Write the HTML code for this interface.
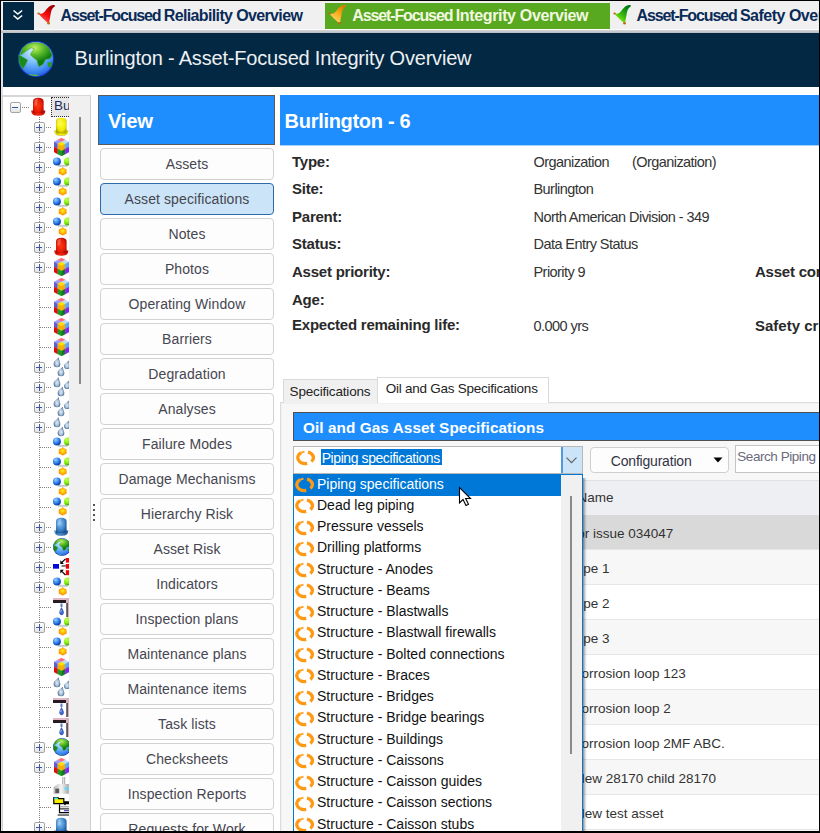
<!DOCTYPE html>
<html><head><meta charset="utf-8"><style>
*{box-sizing:border-box;margin:0;padding:0}
html,body{width:820px;height:833px;overflow:hidden;background:#fff;font-family:"Liberation Sans",sans-serif;color:#333}
.a{position:absolute}
.nw{white-space:nowrap}
.btn{position:absolute;left:100px;width:174px;height:32px;border:1px solid #d2d2d2;border-radius:4px;background:#fdfdfd}
.btn.sel{background:#cce4f7;border-color:#2f6aa8}
.ebox{width:11px;height:11px;border:1.3px solid #a4a4a4;border-radius:2px;background:linear-gradient(#fff,#e4e4e4)}
.ebox .h{position:absolute;left:1.3px;top:3.9px;width:6px;height:1.4px;background:#3a56a0}
.ebox .v{position:absolute;left:3.6px;top:1.3px;width:1.4px;height:6.4px;background:#3a56a0}
</style></head><body>
<svg width="0" height="0" style="position:absolute"><defs>
<radialGradient id="gRed" cx="45%" cy="50%" r="60%"><stop offset="0" stop-color="#ff3a10"/><stop offset=".7" stop-color="#e41a08"/><stop offset="1" stop-color="#a80800"/></radialGradient>
<radialGradient id="gYel" cx="50%" cy="40%" r="60%"><stop offset="0" stop-color="#ffff40"/><stop offset=".7" stop-color="#f0e800"/><stop offset="1" stop-color="#b0a800"/></radialGradient>
<radialGradient id="gBlu" cx="40%" cy="35%" r="70%"><stop offset="0" stop-color="#8cc4f0"/><stop offset=".6" stop-color="#3d86cc"/><stop offset="1" stop-color="#1d4f8a"/></radialGradient>
<radialGradient id="gBall" cx="35%" cy="30%" r="70%"><stop offset="0" stop-color="#9fd0ff"/><stop offset=".6" stop-color="#2a7ef0"/><stop offset="1" stop-color="#1040a0"/></radialGradient>
<radialGradient id="gGreen" cx="35%" cy="30%" r="70%"><stop offset="0" stop-color="#c8ff60"/><stop offset=".6" stop-color="#80f000"/><stop offset="1" stop-color="#30a010"/></radialGradient>
<radialGradient id="gOcean" cx="40%" cy="60%" r="65%"><stop offset="0" stop-color="#b8e4ff"/><stop offset=".7" stop-color="#3f9cf0"/><stop offset="1" stop-color="#1a5ac8"/></radialGradient>
<linearGradient id="gBox" x1="0" y1="0" x2="0" y2="1"><stop offset="0" stop-color="#ffffff"/><stop offset="1" stop-color="#dcdcdc"/></linearGradient>
<linearGradient id="gDrop" x1="0" y1="0" x2="1" y2="1"><stop offset="0" stop-color="#e8f0f8"/><stop offset=".5" stop-color="#7a98b8"/><stop offset="1" stop-color="#1a3a60"/></linearGradient>
<symbol id="ring" viewBox="0 0 20 17"><path d="M5.13 2.77 A7.8 5.9 0 0 0 11.22 13.37" fill="none" stroke="#ff9812" stroke-width="3.3"/><path d="M8.51 1.76 A7.8 5.9 0 0 0 5.13 2.77" fill="none" stroke="#ffa428" stroke-width="2"/><path d="M12.01 1.99 A7.8 5.9 0 0 1 15.40 11.55" fill="none" stroke="#ff9812" stroke-width="3.3"/></symbol>
<symbol id="bulbR" viewBox="0 0 16 20"><path d="M1.3 13.5 C1.3 17 3 18.7 8.3 18.7 C13.6 18.7 15.3 17 15.3 13.5Z" fill="url(#gRed)"/><path d="M3 16.5 L3 4.5 C3 2 5 0.8 8.3 0.8 C11.6 0.8 13.6 2 13.6 4.5 L13.6 16.5Z" fill="url(#gRed)"/><path d="M4.5 3.5 C5.5 2 7 1.8 8 1.8 L7 8 L4.5 9Z" fill="#fff" opacity=".25"/></symbol>
<symbol id="bulbY" viewBox="0 0 16 20"><path d="M1.3 13.5 C1.3 17 3 18.7 8.3 18.7 C13.6 18.7 15.3 17 15.3 13.5Z" fill="url(#gYel)"/><path d="M3 16.5 L3 4.5 C3 2 5 0.8 8.3 0.8 C11.6 0.8 13.6 2 13.6 4.5 L13.6 16.5Z" fill="url(#gYel)"/><path d="M4.5 3.5 C5.5 2 7 1.8 8 1.8 L7 8 L4.5 9Z" fill="#fff" opacity=".25"/></symbol>
<symbol id="bulbB" viewBox="0 0 16 20"><path d="M1.3 13.5 C1.3 17 3 18.7 8.3 18.7 C13.6 18.7 15.3 17 15.3 13.5Z" fill="url(#gBlu)"/><path d="M3 16.5 L3 4.5 C3 2 5 0.8 8.3 0.8 C11.6 0.8 13.6 2 13.6 4.5 L13.6 16.5Z" fill="url(#gBlu)"/><path d="M4.5 3.5 C5.5 2 7 1.8 8 1.8 L7 8 L4.5 9Z" fill="#fff" opacity=".25"/></symbol>
<symbol id="cube" viewBox="0 0 16 18"><polygon points="7.5,0 11.25,2 7.5,4 3.75,2" fill="#ff6878" stroke="#ff6878" stroke-width=".4" stroke-linejoin="round"/><polygon points="3.75,2 7.5,4 3.75,6 0,4" fill="#9c9cf8" stroke="#9c9cf8" stroke-width=".4" stroke-linejoin="round"/><polygon points="11.25,2 15,4 11.25,6 7.5,4" fill="#b8dcff" stroke="#b8dcff" stroke-width=".4" stroke-linejoin="round"/><polygon points="7.5,4 11.25,6 7.5,8 3.75,6" fill="#ffe000" stroke="#ffe000" stroke-width=".4" stroke-linejoin="round"/><polygon points="0,4 3.75,6 3.75,11 0,9" fill="#5c5ce0" stroke="#5c5ce0" stroke-width=".4" stroke-linejoin="round"/><polygon points="3.75,6 7.5,8 7.5,13 3.75,11" fill="#f0b000" stroke="#f0b000" stroke-width=".4" stroke-linejoin="round"/><polygon points="0,9 3.75,11 3.75,16 0,14" fill="#e80808" stroke="#e80808" stroke-width=".4" stroke-linejoin="round"/><polygon points="3.75,11 7.5,13 7.5,18 3.75,16" fill="#1a9a28" stroke="#1a9a28" stroke-width=".4" stroke-linejoin="round"/><polygon points="7.5,8 11.25,6 11.25,11 7.5,13" fill="#ffa800" stroke="#ffa800" stroke-width=".4" stroke-linejoin="round"/><polygon points="11.25,6 15,4 15,9 11.25,11" fill="#58a8f8" stroke="#58a8f8" stroke-width=".4" stroke-linejoin="round"/><polygon points="7.5,13 11.25,11 11.25,16 7.5,18" fill="#0c7a18" stroke="#0c7a18" stroke-width=".4" stroke-linejoin="round"/><polygon points="11.25,11 15,9 15,14 11.25,16" fill="#8a1ef0" stroke="#8a1ef0" stroke-width=".4" stroke-linejoin="round"/></symbol>
<radialGradient id="gOr" cx="50%" cy="40%" r="60%"><stop offset="0" stop-color="#fff020"/><stop offset=".6" stop-color="#ffb000"/><stop offset="1" stop-color="#ff7a00"/></radialGradient>
<symbol id="mol" viewBox="0 0 16 20"><rect x="5" y="7.8" width="9.5" height="2" fill="#c8c8c8"/><rect x="9" y="9" width="1.4" height="2" fill="#d0d0d0"/><circle cx="3.9" cy="4.4" r="4" fill="url(#gBall)"/><circle cx="15" cy="4.4" r="4" fill="url(#gGreen)"/><path d="M9.7 10.6 L13.6 12.6 L13.6 16.6 L9.7 18.6 L5.8 16.6 L5.8 12.6Z" fill="url(#gOr)"/></symbol>
<radialGradient id="gDrop2" cx="50%" cy="55%" r="55%"><stop offset="0" stop-color="#e0ecf6"/><stop offset=".55" stop-color="#a8c0d8"/><stop offset="1" stop-color="#2a4c78"/></radialGradient>
<symbol id="drops" viewBox="0 0 16 20"><path d="M5.8 0.3 C5.3 2.3 7.3 4.359999999999999 7.3 7 A3.3 3.3 0 0 1 0.7000000000000002 7 C0.7000000000000002 3.7 3.8 2.8 5.8 0.3Z" fill="url(#gDrop2)"/><path d="M15.8 3.6 C15.3 5.6 16.8 6.959999999999999 16.8 9.2 A2.8 2.8 0 0 1 11.2 9.2 C11.2 6.3999999999999995 13.8 6.1 15.8 3.6Z" fill="url(#gDrop2)"/><path d="M9.8 9.8 C9.3 11.8 11.3 13.36 11.3 16 A3.3 3.3 0 0 1 4.7 16 C4.7 12.7 7.800000000000001 12.3 9.8 9.8Z" fill="url(#gDrop2)"/></symbol>
<radialGradient id="gLand" cx="45%" cy="22%" r="60%"><stop offset="0" stop-color="#c0f060"/><stop offset=".5" stop-color="#58b828"/><stop offset="1" stop-color="#0c7a10"/></radialGradient>
<radialGradient id="gSea" cx="42%" cy="25%" r="75%"><stop offset="0" stop-color="#d8f0ff"/><stop offset=".45" stop-color="#7ec0fa"/><stop offset=".85" stop-color="#3a86f0"/><stop offset="1" stop-color="#2a60e0"/></radialGradient>
<symbol id="globe" viewBox="0 0 36 36"><circle cx="18" cy="18" r="18" fill="#1838c8"/><circle cx="18" cy="18" r="17" fill="url(#gSea)"/>
<path d="M2.4 12.4 L4.4 7.2 L9.5 3.1 L16.7 1.6 L24.9 2.6 L31.1 7.2 L34.1 13.9 L32.1 17.5 L27.5 18.5 L24.9 23.6 L20.8 25.7 L18.8 19 L15.2 16.5 L12.6 13.9 L13.1 11.9 L16.2 7.8 L13.1 6.7 L6.5 11.3 L2.9 13.9Z" fill="url(#gLand)" stroke="#4aa830" stroke-width=".6" stroke-linejoin="round"/>
<path d="M0.8 13.9 L9.5 19 L7.5 23.6 L4.9 27.7 L1.4 22.6Z" fill="#1a8a18" stroke="#3a9a28" stroke-width=".6" stroke-linejoin="round"/>
<path d="M29.5 21.6 L34.1 21.1 L33.1 26.2 L30 25.7Z" fill="#2a9a20"/>
<path d="M10.6 32.9 L21.8 33.9 L17.7 35.2 L11.5 34.1Z" fill="#50c040"/></symbol>
<symbol id="net" viewBox="0 0 16 20"><rect x="0" y="7" width="6" height="4.7" fill="#0008e0"/><rect x="12.8" y="1" width="3.2" height="4.6" fill="#f00000"/><rect x="12.8" y="7" width="3.2" height="4.7" fill="#f00000"/><rect x="12.8" y="13.2" width="3.2" height="5" fill="#f00000"/><rect x="8.5" y="8.2" width="4.3" height="1.5" fill="#505050"/><path d="M12.5 1.8 L8.8 5.5" stroke="#000" stroke-width="1.2"/><path d="M7.3 3.3 L7.3 6.9 L10.9 6.9Z" fill="#000"/><path d="M12.5 18 L8.8 14.3" stroke="#000" stroke-width="1.2"/><path d="M7.3 16.4 L7.3 12.7 L10.9 12.7Z" fill="#000"/></symbol>
<symbol id="pipe" viewBox="0 0 16 20"><rect x="0" y="1" width="16" height="5" fill="#2a1a22"/><rect x="0" y="1" width="15" height="2" fill="#e0b8c8"/><rect x="13" y="1" width="3" height="19" fill="#d8b0c0"/><rect x="13.5" y="6" width="1.2" height="14" fill="#303030"/><path d="M7.5 6.5 L9.5 6.5 L9.5 10 L7.5 10Z" fill="#5a80c8"/><path d="M8.5 10 C7 12.5 6.3 14 6.3 15.5 C6.3 17.3 7.5 18.2 8.6 18.2 C9.7 18.2 10.8 17.3 10.8 15.5 C10.8 14 10 12.5 8.5 10Z" fill="#3a60c0"/><path d="M7.4 14.5 C7.6 13.5 8 12.8 8.4 12.3 L8.3 16 Z" fill="#c0d8ff"/></symbol>
<linearGradient id="gFac" x1="0" y1="0" x2="1" y2="0"><stop offset="0" stop-color="#b8b8b8"/><stop offset=".5" stop-color="#f4f4f4"/><stop offset="1" stop-color="#a8a8a8"/></linearGradient>
<symbol id="factory" viewBox="0 0 16 20"><rect x="9" y="0" width="3.2" height="8" fill="#b4b4b4"/><rect x="9.8" y="0" width="1.2" height="8" fill="#e0e0e0"/><path d="M0.6 10 L5 7 L15.9 7 L15.9 16.8 L0.6 16.8Z" fill="url(#gFac)"/><rect x="2.3" y="11.6" width="3.8" height="4.6" fill="#585858"/><rect x="11.7" y="10.5" width="4.2" height="2.1" fill="#50d8f8"/></symbol>
<symbol id="folder" viewBox="0 0 16 20"><path d="M0.8 0.2 L4.8 0.2 L5.6 1.6 L10.8 1.6 L10.8 6.6 L0.8 6.6Z" fill="#f8f000" stroke="#000" stroke-width="1.2"/><rect x="1.2" y="0.6" width="3.6" height="1.6" fill="#40e0f8"/><path d="M11 4.3 L16 4.3 L16 7.2 L13 7.2 L12 8.5 L11 7.2Z" fill="#000"/><path d="M6.5 7.2 L6.5 15.6 L16 15.6" stroke="#000" stroke-width="1.2" fill="none"/><rect x="7" y="9.3" width="9" height="1" fill="#909090"/><rect x="7" y="11.4" width="9" height="1" fill="#000"/><rect x="11" y="13" width="3" height="1.3" fill="#5050f0"/><rect x="14" y="13" width="2" height="1.3" fill="#606060"/><rect x="4.7" y="17.4" width="11.3" height="1.3" fill="#404040"/></symbol>
<linearGradient id="gFR" x1="0.2" y1="0.9" x2="0.8" y2="0.1"><stop offset="0" stop-color="#ff5050"/><stop offset=".5" stop-color="#f00808"/><stop offset="1" stop-color="#a00000"/></linearGradient>
<linearGradient id="gFO" x1="0.2" y1="0.9" x2="0.8" y2="0.1"><stop offset="0" stop-color="#ffd870"/><stop offset=".5" stop-color="#fbb020"/><stop offset="1" stop-color="#d88000"/></linearGradient>
<linearGradient id="gFG" x1="0.2" y1="0.9" x2="0.8" y2="0.1"><stop offset="0" stop-color="#90f010"/><stop offset=".5" stop-color="#30b010"/><stop offset="1" stop-color="#007a10"/></linearGradient><symbol id="flagR" viewBox="0 0 26 26"><path d="M4.2 11.6 C6.5 12.2 9 11.8 11 9.2 C13 6.2 15 4 18 3.2 C19.5 2.8 21.2 3 21 4.3 C19 5.6 17.8 7.2 17.2 9.5 C16.5 12.5 16 16 15.2 20.3 L13.6 20.8 C11 18.5 7 15 4.2 11.6Z" fill="url(#gFR)"/><ellipse cx="4.6" cy="11.5" rx="1.3" ry="1.1" fill="#c06a10"/><ellipse cx="14.6" cy="21.3" rx="1.4" ry="1.2" fill="#c06a10"/></symbol><symbol id="flagO" viewBox="0 0 26 26"><path d="M4.2 11.6 C6.5 12.2 9 11.8 11 9.2 C13 6.2 15 4 18 3.2 C19.5 2.8 21.2 3 21 4.3 C19 5.6 17.8 7.2 17.2 9.5 C16.5 12.5 16 16 15.2 20.3 L13.6 20.8 C11 18.5 7 15 4.2 11.6Z" fill="url(#gFO)"/><ellipse cx="4.6" cy="11.5" rx="1.3" ry="1.1" fill="#c06a10"/><ellipse cx="14.6" cy="21.3" rx="1.4" ry="1.2" fill="#c06a10"/></symbol><symbol id="flagG" viewBox="0 0 26 26"><path d="M4.2 11.6 C6.5 12.2 9 11.8 11 9.2 C13 6.2 15 4 18 3.2 C19.5 2.8 21.2 3 21 4.3 C19 5.6 17.8 7.2 17.2 9.5 C16.5 12.5 16 16 15.2 20.3 L13.6 20.8 C11 18.5 7 15 4.2 11.6Z" fill="url(#gFG)"/><ellipse cx="4.6" cy="11.5" rx="1.3" ry="1.1" fill="#c06a10"/><ellipse cx="14.6" cy="21.3" rx="1.4" ry="1.2" fill="#c06a10"/></symbol>
</defs></svg>
<div class="a" style="left:1px;top:1px;width:2px;height:832px;background:#dfe4ea"></div>
<div class="a" style="left:1px;top:1px;width:818px;height:28px;background:#f0f0f0"></div>
<div class="a" style="left:1px;top:29px;width:818px;height:1px;background:#fafafa"></div>
<div class="a" style="left:1px;top:30px;width:818px;height:3px;background:linear-gradient(#d4d6d8,#b8bcc0)"></div>
<div class="a" style="left:3px;top:2px;width:31px;height:28px;background:#022844"></div>
<svg class="a" style="left:11.5px;top:9px" width="12" height="13" viewBox="0 0 12 13"><path d="M1.5 1.5 L5.8 5 L10.1 1.5 M1.5 6.5 L5.8 10 L10.1 6.5" stroke="#fff" stroke-width="1.6" fill="none"/></svg>
<div class="a" style="left:325px;top:3px;width:285px;height:26px;background:#58a820"></div>
<svg class="a" style="left:34px;top:2px" width="26" height="26" viewBox="0 0 26 26"><use href="#flagR"/></svg>
<svg class="a" style="left:325px;top:2px" width="26" height="26" viewBox="0 0 26 26"><use href="#flagO"/></svg>
<svg class="a" style="left:610px;top:2px" width="26" height="26" viewBox="0 0 26 26"><use href="#flagG"/></svg>
<div class="a nw" style="left:60.5px;top:6.82px;font-size:16px;line-height:normal;font-weight:bold;color:#0a2a58;"><span style="letter-spacing:-1.13px">Asset-Focused </span><span style="letter-spacing:-0.64px">Reliability Overview</span></div>
<div class="a nw" style="left:352.3px;top:6.82px;font-size:16px;line-height:normal;font-weight:bold;color:#f2f8e0;"><span style="letter-spacing:-1.13px">Asset-Focused </span><span style="letter-spacing:-0.34px">Integrity Overview</span></div>
<div class="a nw" style="left:636.6px;top:6.82px;font-size:16px;line-height:normal;font-weight:bold;color:#0a2a58;"><span style="letter-spacing:-1.13px">Asset-Focused </span><span style="letter-spacing:-0.5px">Safety Overview</span></div>
<div class="a" style="left:3px;top:33px;width:816px;height:53.5px;background:#022844"></div>
<svg class="a" style="left:18px;top:41px" width="36" height="36" viewBox="0 0 36 36"><use href="#globe"/></svg>
<div class="a nw" style="left:74.6px;top:46.90px;font-size:20px;line-height:normal;letter-spacing:-0.2px;color:#eef0f2;">Burlington - Asset-Focused Integrity Overview</div>
<div class="a" style="left:2px;top:95px;width:89px;height:740px;background:#fff;border:1px solid #cfcfcf;border-top:2px solid #d6d6d6"></div>
<div class="a" style="left:0;top:0;width:69px;height:833px;overflow:hidden"><div class="a" style="left:39px;top:117px;width:1px;height:720px;background:repeating-linear-gradient(#808080 0 1px,transparent 1px 2px)"></div>
<div class="a" style="left:22px;top:107px;width:8px;height:1px;background:repeating-linear-gradient(90deg,#808080 0 1px,transparent 1px 2px)"></div>
<div class="a ebox" style="left:10px;top:102px"><i class="h"></i></div>
<svg class="a" style="left:30px;top:97px" width="16" height="20" viewBox="0 0 16 20"><use href="#bulbR"/></svg>
<div class="a" style="left:51px;top:96.5px;width:30px;height:20px;background:#e8e8e8;border:1px dotted #333"></div>
<div class="a nw" style="left:54px;top:97.78px;font-size:13.5px;line-height:normal;color:#1a2a60;">Burlington</div>
<div class="a" style="left:46px;top:127px;width:6px;height:1px;background:repeating-linear-gradient(90deg,#808080 0 1px,transparent 1px 2px)"></div>
<div class="a ebox" style="left:34px;top:122px"><i class="h"></i><i class="v"></i></div>
<svg class="a" style="left:53px;top:117px" width="16" height="20" viewBox="0 0 16 20"><use href="#bulbY"/></svg>
<div class="a" style="left:46px;top:147px;width:6px;height:1px;background:repeating-linear-gradient(90deg,#808080 0 1px,transparent 1px 2px)"></div>
<div class="a ebox" style="left:34px;top:142px"><i class="h"></i><i class="v"></i></div>
<svg class="a" style="left:54px;top:137.5px" width="16" height="18" viewBox="0 0 16 18"><use href="#cube"/></svg>
<div class="a" style="left:46px;top:167px;width:6px;height:1px;background:repeating-linear-gradient(90deg,#808080 0 1px,transparent 1px 2px)"></div>
<div class="a ebox" style="left:34px;top:162px"><i class="h"></i><i class="v"></i></div>
<svg class="a" style="left:53px;top:157px" width="16" height="20" viewBox="0 0 16 20"><use href="#mol"/></svg>
<div class="a" style="left:46px;top:187px;width:6px;height:1px;background:repeating-linear-gradient(90deg,#808080 0 1px,transparent 1px 2px)"></div>
<div class="a ebox" style="left:34px;top:182px"><i class="h"></i><i class="v"></i></div>
<svg class="a" style="left:53px;top:177px" width="16" height="20" viewBox="0 0 16 20"><use href="#mol"/></svg>
<div class="a" style="left:46px;top:207px;width:6px;height:1px;background:repeating-linear-gradient(90deg,#808080 0 1px,transparent 1px 2px)"></div>
<div class="a ebox" style="left:34px;top:202px"><i class="h"></i><i class="v"></i></div>
<svg class="a" style="left:53px;top:197px" width="16" height="20" viewBox="0 0 16 20"><use href="#mol"/></svg>
<div class="a" style="left:46px;top:227px;width:6px;height:1px;background:repeating-linear-gradient(90deg,#808080 0 1px,transparent 1px 2px)"></div>
<div class="a ebox" style="left:34px;top:222px"><i class="h"></i><i class="v"></i></div>
<svg class="a" style="left:53px;top:217px" width="16" height="20" viewBox="0 0 16 20"><use href="#mol"/></svg>
<div class="a" style="left:46px;top:247px;width:6px;height:1px;background:repeating-linear-gradient(90deg,#808080 0 1px,transparent 1px 2px)"></div>
<div class="a ebox" style="left:34px;top:242px"><i class="h"></i><i class="v"></i></div>
<svg class="a" style="left:53px;top:237px" width="16" height="20" viewBox="0 0 16 20"><use href="#bulbR"/></svg>
<div class="a" style="left:46px;top:267px;width:6px;height:1px;background:repeating-linear-gradient(90deg,#808080 0 1px,transparent 1px 2px)"></div>
<div class="a ebox" style="left:34px;top:262px"><i class="h"></i><i class="v"></i></div>
<svg class="a" style="left:54px;top:257.5px" width="16" height="18" viewBox="0 0 16 18"><use href="#cube"/></svg>
<div class="a" style="left:40px;top:287px;width:12px;height:1px;background:repeating-linear-gradient(90deg,#808080 0 1px,transparent 1px 2px)"></div>
<svg class="a" style="left:54px;top:277.5px" width="16" height="18" viewBox="0 0 16 18"><use href="#cube"/></svg>
<div class="a" style="left:40px;top:307px;width:12px;height:1px;background:repeating-linear-gradient(90deg,#808080 0 1px,transparent 1px 2px)"></div>
<svg class="a" style="left:54px;top:297.5px" width="16" height="18" viewBox="0 0 16 18"><use href="#cube"/></svg>
<div class="a" style="left:40px;top:327px;width:12px;height:1px;background:repeating-linear-gradient(90deg,#808080 0 1px,transparent 1px 2px)"></div>
<svg class="a" style="left:54px;top:317.5px" width="16" height="18" viewBox="0 0 16 18"><use href="#cube"/></svg>
<div class="a" style="left:40px;top:347px;width:12px;height:1px;background:repeating-linear-gradient(90deg,#808080 0 1px,transparent 1px 2px)"></div>
<svg class="a" style="left:54px;top:337.5px" width="16" height="18" viewBox="0 0 16 18"><use href="#cube"/></svg>
<div class="a" style="left:46px;top:367px;width:6px;height:1px;background:repeating-linear-gradient(90deg,#808080 0 1px,transparent 1px 2px)"></div>
<div class="a ebox" style="left:34px;top:362px"><i class="h"></i><i class="v"></i></div>
<svg class="a" style="left:53px;top:357px" width="16" height="20" viewBox="0 0 16 20"><use href="#drops"/></svg>
<div class="a" style="left:46px;top:387px;width:6px;height:1px;background:repeating-linear-gradient(90deg,#808080 0 1px,transparent 1px 2px)"></div>
<div class="a ebox" style="left:34px;top:382px"><i class="h"></i><i class="v"></i></div>
<svg class="a" style="left:53px;top:377px" width="16" height="20" viewBox="0 0 16 20"><use href="#drops"/></svg>
<div class="a" style="left:46px;top:407px;width:6px;height:1px;background:repeating-linear-gradient(90deg,#808080 0 1px,transparent 1px 2px)"></div>
<div class="a ebox" style="left:34px;top:402px"><i class="h"></i><i class="v"></i></div>
<svg class="a" style="left:53px;top:397px" width="16" height="20" viewBox="0 0 16 20"><use href="#drops"/></svg>
<div class="a" style="left:46px;top:427px;width:6px;height:1px;background:repeating-linear-gradient(90deg,#808080 0 1px,transparent 1px 2px)"></div>
<div class="a ebox" style="left:34px;top:422px"><i class="h"></i><i class="v"></i></div>
<svg class="a" style="left:53px;top:417px" width="16" height="20" viewBox="0 0 16 20"><use href="#drops"/></svg>
<div class="a" style="left:40px;top:447px;width:12px;height:1px;background:repeating-linear-gradient(90deg,#808080 0 1px,transparent 1px 2px)"></div>
<svg class="a" style="left:53px;top:437px" width="16" height="20" viewBox="0 0 16 20"><use href="#mol"/></svg>
<div class="a" style="left:40px;top:467px;width:12px;height:1px;background:repeating-linear-gradient(90deg,#808080 0 1px,transparent 1px 2px)"></div>
<svg class="a" style="left:53px;top:457px" width="16" height="20" viewBox="0 0 16 20"><use href="#mol"/></svg>
<div class="a" style="left:40px;top:487px;width:12px;height:1px;background:repeating-linear-gradient(90deg,#808080 0 1px,transparent 1px 2px)"></div>
<svg class="a" style="left:53px;top:477px" width="16" height="20" viewBox="0 0 16 20"><use href="#mol"/></svg>
<div class="a" style="left:40px;top:507px;width:12px;height:1px;background:repeating-linear-gradient(90deg,#808080 0 1px,transparent 1px 2px)"></div>
<svg class="a" style="left:53px;top:497px" width="16" height="20" viewBox="0 0 16 20"><use href="#mol"/></svg>
<div class="a" style="left:46px;top:527px;width:6px;height:1px;background:repeating-linear-gradient(90deg,#808080 0 1px,transparent 1px 2px)"></div>
<div class="a ebox" style="left:34px;top:522px"><i class="h"></i><i class="v"></i></div>
<svg class="a" style="left:53px;top:517px" width="16" height="20" viewBox="0 0 16 20"><use href="#bulbB"/></svg>
<div class="a" style="left:46px;top:547px;width:6px;height:1px;background:repeating-linear-gradient(90deg,#808080 0 1px,transparent 1px 2px)"></div>
<div class="a ebox" style="left:34px;top:542px"><i class="h"></i><i class="v"></i></div>
<svg class="a" style="left:53px;top:538px" width="18" height="18" viewBox="0 0 36 36"><use href="#globe"/></svg>
<div class="a" style="left:46px;top:567px;width:6px;height:1px;background:repeating-linear-gradient(90deg,#808080 0 1px,transparent 1px 2px)"></div>
<div class="a ebox" style="left:34px;top:562px"><i class="h"></i><i class="v"></i></div>
<svg class="a" style="left:53px;top:557px" width="16" height="20" viewBox="0 0 16 20"><use href="#net"/></svg>
<div class="a" style="left:46px;top:587px;width:6px;height:1px;background:repeating-linear-gradient(90deg,#808080 0 1px,transparent 1px 2px)"></div>
<div class="a ebox" style="left:34px;top:582px"><i class="h"></i><i class="v"></i></div>
<svg class="a" style="left:53px;top:577px" width="16" height="20" viewBox="0 0 16 20"><use href="#mol"/></svg>
<div class="a" style="left:40px;top:607px;width:12px;height:1px;background:repeating-linear-gradient(90deg,#808080 0 1px,transparent 1px 2px)"></div>
<svg class="a" style="left:53px;top:597px" width="16" height="20" viewBox="0 0 16 20"><use href="#pipe"/></svg>
<div class="a" style="left:46px;top:627px;width:6px;height:1px;background:repeating-linear-gradient(90deg,#808080 0 1px,transparent 1px 2px)"></div>
<div class="a ebox" style="left:34px;top:622px"><i class="h"></i><i class="v"></i></div>
<svg class="a" style="left:53px;top:617px" width="16" height="20" viewBox="0 0 16 20"><use href="#mol"/></svg>
<div class="a" style="left:40px;top:647px;width:12px;height:1px;background:repeating-linear-gradient(90deg,#808080 0 1px,transparent 1px 2px)"></div>
<svg class="a" style="left:53px;top:637px" width="16" height="20" viewBox="0 0 16 20"><use href="#mol"/></svg>
<div class="a" style="left:40px;top:667px;width:12px;height:1px;background:repeating-linear-gradient(90deg,#808080 0 1px,transparent 1px 2px)"></div>
<svg class="a" style="left:54px;top:657.5px" width="16" height="18" viewBox="0 0 16 18"><use href="#cube"/></svg>
<div class="a" style="left:40px;top:687px;width:12px;height:1px;background:repeating-linear-gradient(90deg,#808080 0 1px,transparent 1px 2px)"></div>
<svg class="a" style="left:53px;top:677px" width="16" height="20" viewBox="0 0 16 20"><use href="#drops"/></svg>
<div class="a" style="left:40px;top:707px;width:12px;height:1px;background:repeating-linear-gradient(90deg,#808080 0 1px,transparent 1px 2px)"></div>
<svg class="a" style="left:53px;top:697px" width="16" height="20" viewBox="0 0 16 20"><use href="#pipe"/></svg>
<div class="a" style="left:40px;top:727px;width:12px;height:1px;background:repeating-linear-gradient(90deg,#808080 0 1px,transparent 1px 2px)"></div>
<svg class="a" style="left:53px;top:717px" width="16" height="20" viewBox="0 0 16 20"><use href="#pipe"/></svg>
<div class="a" style="left:46px;top:747px;width:6px;height:1px;background:repeating-linear-gradient(90deg,#808080 0 1px,transparent 1px 2px)"></div>
<div class="a ebox" style="left:34px;top:742px"><i class="h"></i><i class="v"></i></div>
<svg class="a" style="left:53px;top:738px" width="18" height="18" viewBox="0 0 36 36"><use href="#globe"/></svg>
<div class="a" style="left:46px;top:767px;width:6px;height:1px;background:repeating-linear-gradient(90deg,#808080 0 1px,transparent 1px 2px)"></div>
<div class="a ebox" style="left:34px;top:762px"><i class="h"></i><i class="v"></i></div>
<svg class="a" style="left:54px;top:757.5px" width="16" height="18" viewBox="0 0 16 18"><use href="#cube"/></svg>
<div class="a" style="left:40px;top:787px;width:12px;height:1px;background:repeating-linear-gradient(90deg,#808080 0 1px,transparent 1px 2px)"></div>
<svg class="a" style="left:53px;top:777px" width="16" height="20" viewBox="0 0 16 20"><use href="#factory"/></svg>
<div class="a" style="left:40px;top:807px;width:12px;height:1px;background:repeating-linear-gradient(90deg,#808080 0 1px,transparent 1px 2px)"></div>
<svg class="a" style="left:53px;top:797px" width="16" height="20" viewBox="0 0 16 20"><use href="#folder"/></svg>
<div class="a" style="left:46px;top:827px;width:6px;height:1px;background:repeating-linear-gradient(90deg,#808080 0 1px,transparent 1px 2px)"></div>
<div class="a ebox" style="left:34px;top:822px"><i class="h"></i><i class="v"></i></div>
<svg class="a" style="left:53px;top:817px" width="16" height="20" viewBox="0 0 16 20"><use href="#bulbB"/></svg></div>
<div class="a" style="left:69px;top:96px;width:21px;height:740px;background:#f0f0f0"></div>
<div class="a" style="left:79px;top:117px;width:2px;height:267px;background:#8a8a8a"></div>
<div class="a" style="left:93px;top:504px;width:2px;height:18px;background:repeating-linear-gradient(#555 0 2px,transparent 2px 5px)"></div>
<div class="a" style="left:98px;top:95px;width:177px;height:50px;background:#1e8eff;border:1px solid #5a5a5a"></div>
<div class="a nw" style="left:108px;top:109.83px;font-size:20.3px;line-height:normal;font-weight:bold;letter-spacing:-0.3px;color:#fff;">View</div>
<div class="btn" style="top:148px"></div>
<div class="a nw" style="left:100px;width:174px;text-align:center;top:155.63px;font-size:14px;color:#464650;letter-spacing:0.1px">Assets</div>
<div class="btn sel" style="top:183px"></div>
<div class="a nw" style="left:100px;width:174px;text-align:center;top:190.63px;font-size:14px;color:#464650;letter-spacing:0.1px">Asset specifications</div>
<div class="btn" style="top:218px"></div>
<div class="a nw" style="left:100px;width:174px;text-align:center;top:225.63px;font-size:14px;color:#464650;letter-spacing:0.1px">Notes</div>
<div class="btn" style="top:253px"></div>
<div class="a nw" style="left:100px;width:174px;text-align:center;top:260.63px;font-size:14px;color:#464650;letter-spacing:0.1px">Photos</div>
<div class="btn" style="top:288px"></div>
<div class="a nw" style="left:100px;width:174px;text-align:center;top:295.63px;font-size:14px;color:#464650;letter-spacing:0.1px">Operating Window</div>
<div class="btn" style="top:323px"></div>
<div class="a nw" style="left:100px;width:174px;text-align:center;top:330.63px;font-size:14px;color:#464650;letter-spacing:0.1px">Barriers</div>
<div class="btn" style="top:358px"></div>
<div class="a nw" style="left:100px;width:174px;text-align:center;top:365.63px;font-size:14px;color:#464650;letter-spacing:0.1px">Degradation</div>
<div class="btn" style="top:393px"></div>
<div class="a nw" style="left:100px;width:174px;text-align:center;top:400.63px;font-size:14px;color:#464650;letter-spacing:0.1px">Analyses</div>
<div class="btn" style="top:428px"></div>
<div class="a nw" style="left:100px;width:174px;text-align:center;top:435.63px;font-size:14px;color:#464650;letter-spacing:0.1px">Failure Modes</div>
<div class="btn" style="top:463px"></div>
<div class="a nw" style="left:100px;width:174px;text-align:center;top:470.63px;font-size:14px;color:#464650;letter-spacing:0.1px">Damage Mechanisms</div>
<div class="btn" style="top:498px"></div>
<div class="a nw" style="left:100px;width:174px;text-align:center;top:505.63px;font-size:14px;color:#464650;letter-spacing:0.1px">Hierarchy Risk</div>
<div class="btn" style="top:533px"></div>
<div class="a nw" style="left:100px;width:174px;text-align:center;top:540.63px;font-size:14px;color:#464650;letter-spacing:0.1px">Asset Risk</div>
<div class="btn" style="top:568px"></div>
<div class="a nw" style="left:100px;width:174px;text-align:center;top:575.63px;font-size:14px;color:#464650;letter-spacing:0.1px">Indicators</div>
<div class="btn" style="top:603px"></div>
<div class="a nw" style="left:100px;width:174px;text-align:center;top:610.63px;font-size:14px;color:#464650;letter-spacing:0.1px">Inspection plans</div>
<div class="btn" style="top:638px"></div>
<div class="a nw" style="left:100px;width:174px;text-align:center;top:645.63px;font-size:14px;color:#464650;letter-spacing:0.1px">Maintenance plans</div>
<div class="btn" style="top:673px"></div>
<div class="a nw" style="left:100px;width:174px;text-align:center;top:680.63px;font-size:14px;color:#464650;letter-spacing:0.1px">Maintenance items</div>
<div class="btn" style="top:708px"></div>
<div class="a nw" style="left:100px;width:174px;text-align:center;top:715.63px;font-size:14px;color:#464650;letter-spacing:0.1px">Task lists</div>
<div class="btn" style="top:743px"></div>
<div class="a nw" style="left:100px;width:174px;text-align:center;top:750.63px;font-size:14px;color:#464650;letter-spacing:0.1px">Checksheets</div>
<div class="btn" style="top:778px"></div>
<div class="a nw" style="left:100px;width:174px;text-align:center;top:785.63px;font-size:14px;color:#464650;letter-spacing:0.1px">Inspection Reports</div>
<div class="btn" style="top:813px"></div>
<div class="a nw" style="left:100px;width:174px;text-align:center;top:820.63px;font-size:14px;color:#464650;letter-spacing:0.1px">Requests for Work</div>
<div class="a" style="left:280px;top:95px;width:540px;height:50px;background:#1e8eff"></div>
<div class="a" style="left:280px;top:145px;width:540px;height:1px;background:#a8d0f8"></div>
<div class="a nw" style="left:284.6px;top:109.60px;font-size:20px;line-height:normal;font-weight:bold;letter-spacing:-0.3px;color:#fff;">Burlington - 6</div>
<div class="a nw" style="left:292px;top:153.43px;font-size:15px;line-height:normal;font-weight:bold;letter-spacing:-0.23px;color:#2a2a2a;">Type:</div>
<div class="a nw" style="left:292px;top:180.43px;font-size:15px;line-height:normal;font-weight:bold;letter-spacing:-0.23px;color:#2a2a2a;">Site:</div>
<div class="a nw" style="left:292px;top:208.12px;font-size:15px;line-height:normal;font-weight:bold;letter-spacing:-0.23px;color:#2a2a2a;">Parent:</div>
<div class="a nw" style="left:292px;top:235.43px;font-size:15px;line-height:normal;font-weight:bold;letter-spacing:-0.23px;color:#2a2a2a;">Status:</div>
<div class="a nw" style="left:292px;top:263.12px;font-size:15px;line-height:normal;font-weight:bold;letter-spacing:-0.23px;color:#2a2a2a;">Asset priority:</div>
<div class="a nw" style="left:292px;top:290.93px;font-size:15px;line-height:normal;font-weight:bold;letter-spacing:-0.23px;color:#2a2a2a;">Age:</div>
<div class="a nw" style="left:292px;top:316.43px;font-size:15px;line-height:normal;font-weight:bold;letter-spacing:-0.23px;color:#2a2a2a;">Expected remaining life:</div>
<div class="a nw" style="left:755px;top:263.12px;font-size:15px;line-height:normal;font-weight:bold;letter-spacing:-0.23px;color:#2a2a2a;">Asset condition:</div>
<div class="a nw" style="left:755px;top:317.43px;font-size:15px;line-height:normal;font-weight:bold;color:#2a2a2a;">Safety criticality:</div>
<div class="a nw" style="left:533.5px;top:154.08px;font-size:14.5px;line-height:normal;letter-spacing:-0.56px;color:#333;">Organization</div>
<div class="a nw" style="left:533.5px;top:181.18px;font-size:14.5px;line-height:normal;letter-spacing:-0.56px;color:#333;">Burlington</div>
<div class="a nw" style="left:533.5px;top:208.88px;font-size:14.5px;line-height:normal;letter-spacing:-0.56px;color:#333;">North American Division - 349</div>
<div class="a nw" style="left:533.5px;top:236.18px;font-size:14.5px;line-height:normal;letter-spacing:-0.56px;color:#333;">Data Entry Status</div>
<div class="a nw" style="left:533.5px;top:263.88px;font-size:14.5px;line-height:normal;letter-spacing:-0.56px;color:#333;">Priority 9</div>
<div class="a nw" style="left:533.5px;top:318.08px;font-size:14.5px;line-height:normal;letter-spacing:-0.56px;color:#333;">0.000 yrs</div>
<div class="a nw" style="left:632px;top:154.08px;font-size:14.5px;line-height:normal;letter-spacing:-0.56px;color:#333;">(Organization)</div>
<div class="a" style="left:280px;top:402px;width:541px;height:440px;background:#f7f7f7;border:1px solid #dcdcdc;box-shadow:inset 1px 1px 0 #f0f0f0"></div>
<div class="a" style="left:283px;top:379px;width:95px;height:24px;background:#f0f0f0;border:1px solid #dadada;border-bottom:none"></div>
<div class="a nw" style="left:289.6px;top:383.78px;font-size:13.5px;line-height:normal;letter-spacing:-0.18px;color:#222;">Specifications</div>
<div class="a" style="left:377px;top:377px;width:172px;height:26px;background:#fff;border:1px solid #dadada;border-bottom:none"></div>
<div class="a nw" style="left:385.8px;top:380.78px;font-size:13.5px;line-height:normal;letter-spacing:-0.25px;color:#222;">Oil and Gas Specifications</div>
<div class="a" style="left:293px;top:412px;width:530px;height:29px;background:#1e8eff;border:1px solid #505050"></div>
<div class="a nw" style="left:302.9px;top:418.65px;font-size:15.3px;line-height:normal;font-weight:bold;letter-spacing:0.09px;color:#fff;">Oil and Gas Asset Specifications</div>
<div class="a" style="left:293px;top:446px;width:290px;height:28px;background:#fff;border:1px solid #b8b8b8"></div>
<div class="a" style="left:561px;top:447px;width:21px;height:26px;background:#cce4f7;border-left:2px solid #4f9ae0"></div>
<svg class="a" style="left:566px;top:457px" width="11" height="7" viewBox="0 0 11 7"><path d="M0.5 0.7 L5.5 5.7 L10.5 0.7" stroke="#606060" stroke-width="1.2" fill="none"/></svg>
<div class="a" style="left:321px;top:449px;width:121px;height:16px;background:#0078d7"></div>
<div class="a nw" style="left:321.7px;top:450.13px;font-size:14px;line-height:normal;letter-spacing:-0.42px;color:#fff;">Piping specifications</div>
<svg class="a" style="left:296px;top:450px" width="20" height="17" viewBox="0 0 20 17"><use href="#ring"/></svg>
<div class="a" style="left:590px;top:447px;width:139px;height:26px;background:#fdfdfd;border:1px solid #cfcfcf;border-radius:4px"></div>
<div class="a nw" style="left:610.8px;top:452.63px;font-size:14px;line-height:normal;letter-spacing:-0.2px;color:#333344;">Configuration</div>
<svg class="a" style="left:713px;top:457px" width="10" height="6" viewBox="0 0 10 6"><path d="M0.5 0.5 L9.5 0.5 L5 5.5Z" fill="#000"/></svg>
<div class="a" style="left:735px;top:445px;width:90px;height:28px;background:#fff;border:1px solid #c4c4c4"></div>
<div class="a nw" style="left:737.3px;top:449.48px;font-size:13.5px;line-height:normal;letter-spacing:-0.45px;color:#6a6a7c;">Search Piping</div>
<div class="a" style="left:293px;top:480px;width:527px;height:35px;background:#eeeff3;border-top:1px solid #e0e0e0"></div>
<div class="a nw" style="left:577.5px;top:489.98px;font-size:13.5px;line-height:normal;color:#333;">Name</div>
<div class="a" style="left:293px;top:515px;width:527px;height:35px;background:#d9d9d9;border-bottom:1px solid #e6e6e6"></div>
<div class="a nw" style="left:555.5px;top:525.78px;font-size:13.5px;line-height:normal;color:#333;">Major issue 034047</div>
<div class="a" style="left:293px;top:550px;width:527px;height:35px;background:#f7f7f7;border-bottom:1px solid #e6e6e6"></div>
<div class="a nw" style="left:571.2px;top:560.78px;font-size:13.5px;line-height:normal;color:#333;">Pipe 1</div>
<div class="a" style="left:293px;top:585px;width:527px;height:35px;background:#ffffff;border-bottom:1px solid #e6e6e6"></div>
<div class="a nw" style="left:571.2px;top:595.78px;font-size:13.5px;line-height:normal;color:#333;">Pipe 2</div>
<div class="a" style="left:293px;top:620px;width:527px;height:35px;background:#f7f7f7;border-bottom:1px solid #e6e6e6"></div>
<div class="a nw" style="left:571.2px;top:630.78px;font-size:13.5px;line-height:normal;color:#333;">Pipe 3</div>
<div class="a" style="left:293px;top:655px;width:527px;height:35px;background:#ffffff;border-bottom:1px solid #e6e6e6"></div>
<div class="a nw" style="left:571.7px;top:665.78px;font-size:13.5px;line-height:normal;color:#333;">Corrosion loop 123</div>
<div class="a" style="left:293px;top:690px;width:527px;height:35px;background:#f7f7f7;border-bottom:1px solid #e6e6e6"></div>
<div class="a nw" style="left:571.8px;top:700.78px;font-size:13.5px;line-height:normal;color:#333;">Corrosion loop 2</div>
<div class="a" style="left:293px;top:725px;width:527px;height:35px;background:#ffffff;border-bottom:1px solid #e6e6e6"></div>
<div class="a nw" style="left:571.8px;top:735.78px;font-size:13.5px;line-height:normal;color:#333;">Corrosion loop 2MF ABC.</div>
<div class="a" style="left:293px;top:760px;width:527px;height:35px;background:#f7f7f7;border-bottom:1px solid #e6e6e6"></div>
<div class="a nw" style="left:574.9px;top:770.78px;font-size:13.5px;line-height:normal;color:#333;">New 28170 child 28170</div>
<div class="a" style="left:293px;top:795px;width:527px;height:35px;background:#ffffff;border-bottom:1px solid #e6e6e6"></div>
<div class="a nw" style="left:574.9px;top:805.78px;font-size:13.5px;line-height:normal;color:#333;">New test asset</div>
<div class="a" style="left:293px;top:474px;width:290px;height:370px;background:#fff;border:1px solid #0078d7"></div>
<div class="a" style="left:583px;top:478px;width:4px;height:360px;background:linear-gradient(90deg,rgba(0,0,0,.45),rgba(0,0,0,.12) 60%,rgba(0,0,0,0))"></div>
<div class="a" style="left:294px;top:474px;width:267px;height:22px;background:#0078d7"></div>
<div class="a" style="left:561px;top:475px;width:21px;height:360px;background:#f0f0f0"></div>
<div class="a" style="left:570px;top:496px;width:2px;height:258px;background:#8a8a8a"></div>
<svg class="a" style="left:295px;top:477.10px" width="20" height="17" viewBox="0 0 20 17"><use href="#ring"/></svg>
<div class="a nw" style="left:317px;top:475.63px;font-size:14px;line-height:normal;color:#fff;">Piping specifications</div>
<svg class="a" style="left:295px;top:498.35px" width="20" height="17" viewBox="0 0 20 17"><use href="#ring"/></svg>
<div class="a nw" style="left:317px;top:496.88px;font-size:14px;line-height:normal;color:#111;">Dead leg piping</div>
<svg class="a" style="left:295px;top:519.60px" width="20" height="17" viewBox="0 0 20 17"><use href="#ring"/></svg>
<div class="a nw" style="left:317px;top:518.13px;font-size:14px;line-height:normal;color:#111;">Pressure vessels</div>
<svg class="a" style="left:295px;top:540.85px" width="20" height="17" viewBox="0 0 20 17"><use href="#ring"/></svg>
<div class="a nw" style="left:317px;top:539.38px;font-size:14px;line-height:normal;color:#111;">Drilling platforms</div>
<svg class="a" style="left:295px;top:562.10px" width="20" height="17" viewBox="0 0 20 17"><use href="#ring"/></svg>
<div class="a nw" style="left:317px;top:560.63px;font-size:14px;line-height:normal;color:#111;">Structure - Anodes</div>
<svg class="a" style="left:295px;top:583.35px" width="20" height="17" viewBox="0 0 20 17"><use href="#ring"/></svg>
<div class="a nw" style="left:317px;top:581.88px;font-size:14px;line-height:normal;color:#111;">Structure - Beams</div>
<svg class="a" style="left:295px;top:604.60px" width="20" height="17" viewBox="0 0 20 17"><use href="#ring"/></svg>
<div class="a nw" style="left:317px;top:603.13px;font-size:14px;line-height:normal;color:#111;">Structure - Blastwalls</div>
<svg class="a" style="left:295px;top:625.85px" width="20" height="17" viewBox="0 0 20 17"><use href="#ring"/></svg>
<div class="a nw" style="left:317px;top:624.38px;font-size:14px;line-height:normal;color:#111;">Structure - Blastwall firewalls</div>
<svg class="a" style="left:295px;top:647.10px" width="20" height="17" viewBox="0 0 20 17"><use href="#ring"/></svg>
<div class="a nw" style="left:317px;top:645.63px;font-size:14px;line-height:normal;color:#111;">Structure - Bolted connections</div>
<svg class="a" style="left:295px;top:668.35px" width="20" height="17" viewBox="0 0 20 17"><use href="#ring"/></svg>
<div class="a nw" style="left:317px;top:666.88px;font-size:14px;line-height:normal;color:#111;">Structure - Braces</div>
<svg class="a" style="left:295px;top:689.60px" width="20" height="17" viewBox="0 0 20 17"><use href="#ring"/></svg>
<div class="a nw" style="left:317px;top:688.13px;font-size:14px;line-height:normal;color:#111;">Structure - Bridges</div>
<svg class="a" style="left:295px;top:710.85px" width="20" height="17" viewBox="0 0 20 17"><use href="#ring"/></svg>
<div class="a nw" style="left:317px;top:709.38px;font-size:14px;line-height:normal;color:#111;">Structure - Bridge bearings</div>
<svg class="a" style="left:295px;top:732.10px" width="20" height="17" viewBox="0 0 20 17"><use href="#ring"/></svg>
<div class="a nw" style="left:317px;top:730.63px;font-size:14px;line-height:normal;color:#111;">Structure - Buildings</div>
<svg class="a" style="left:295px;top:753.35px" width="20" height="17" viewBox="0 0 20 17"><use href="#ring"/></svg>
<div class="a nw" style="left:317px;top:751.88px;font-size:14px;line-height:normal;color:#111;">Structure - Caissons</div>
<svg class="a" style="left:295px;top:774.60px" width="20" height="17" viewBox="0 0 20 17"><use href="#ring"/></svg>
<div class="a nw" style="left:317px;top:773.13px;font-size:14px;line-height:normal;color:#111;">Structure - Caisson guides</div>
<svg class="a" style="left:295px;top:795.85px" width="20" height="17" viewBox="0 0 20 17"><use href="#ring"/></svg>
<div class="a nw" style="left:317px;top:794.38px;font-size:14px;line-height:normal;color:#111;">Structure - Caisson sections</div>
<svg class="a" style="left:295px;top:817.10px" width="20" height="17" viewBox="0 0 20 17"><use href="#ring"/></svg>
<div class="a nw" style="left:317px;top:815.63px;font-size:14px;line-height:normal;color:#111;">Structure - Caisson stubs</div>
<svg class="a" style="left:295px;top:838.35px" width="20" height="17" viewBox="0 0 20 17"><use href="#ring"/></svg>
<div class="a nw" style="left:317px;top:836.88px;font-size:14px;line-height:normal;color:#111;">Structure - Cathodic</div>
<svg class="a" style="left:458px;top:486px" width="14" height="21" viewBox="0 0 14 21"><path d="M1.5 1.5 L1.5 17 L5 13.5 L8 19.5 L10.5 18.3 L7.6 12.5 L12.5 12.5Z" fill="#fff" stroke="#000" stroke-width="1.1"/></svg>
<div class="a" style="left:0;top:0;width:820px;height:833px;border:1px solid #000;border-bottom-width:2px"></div>
</body></html>
